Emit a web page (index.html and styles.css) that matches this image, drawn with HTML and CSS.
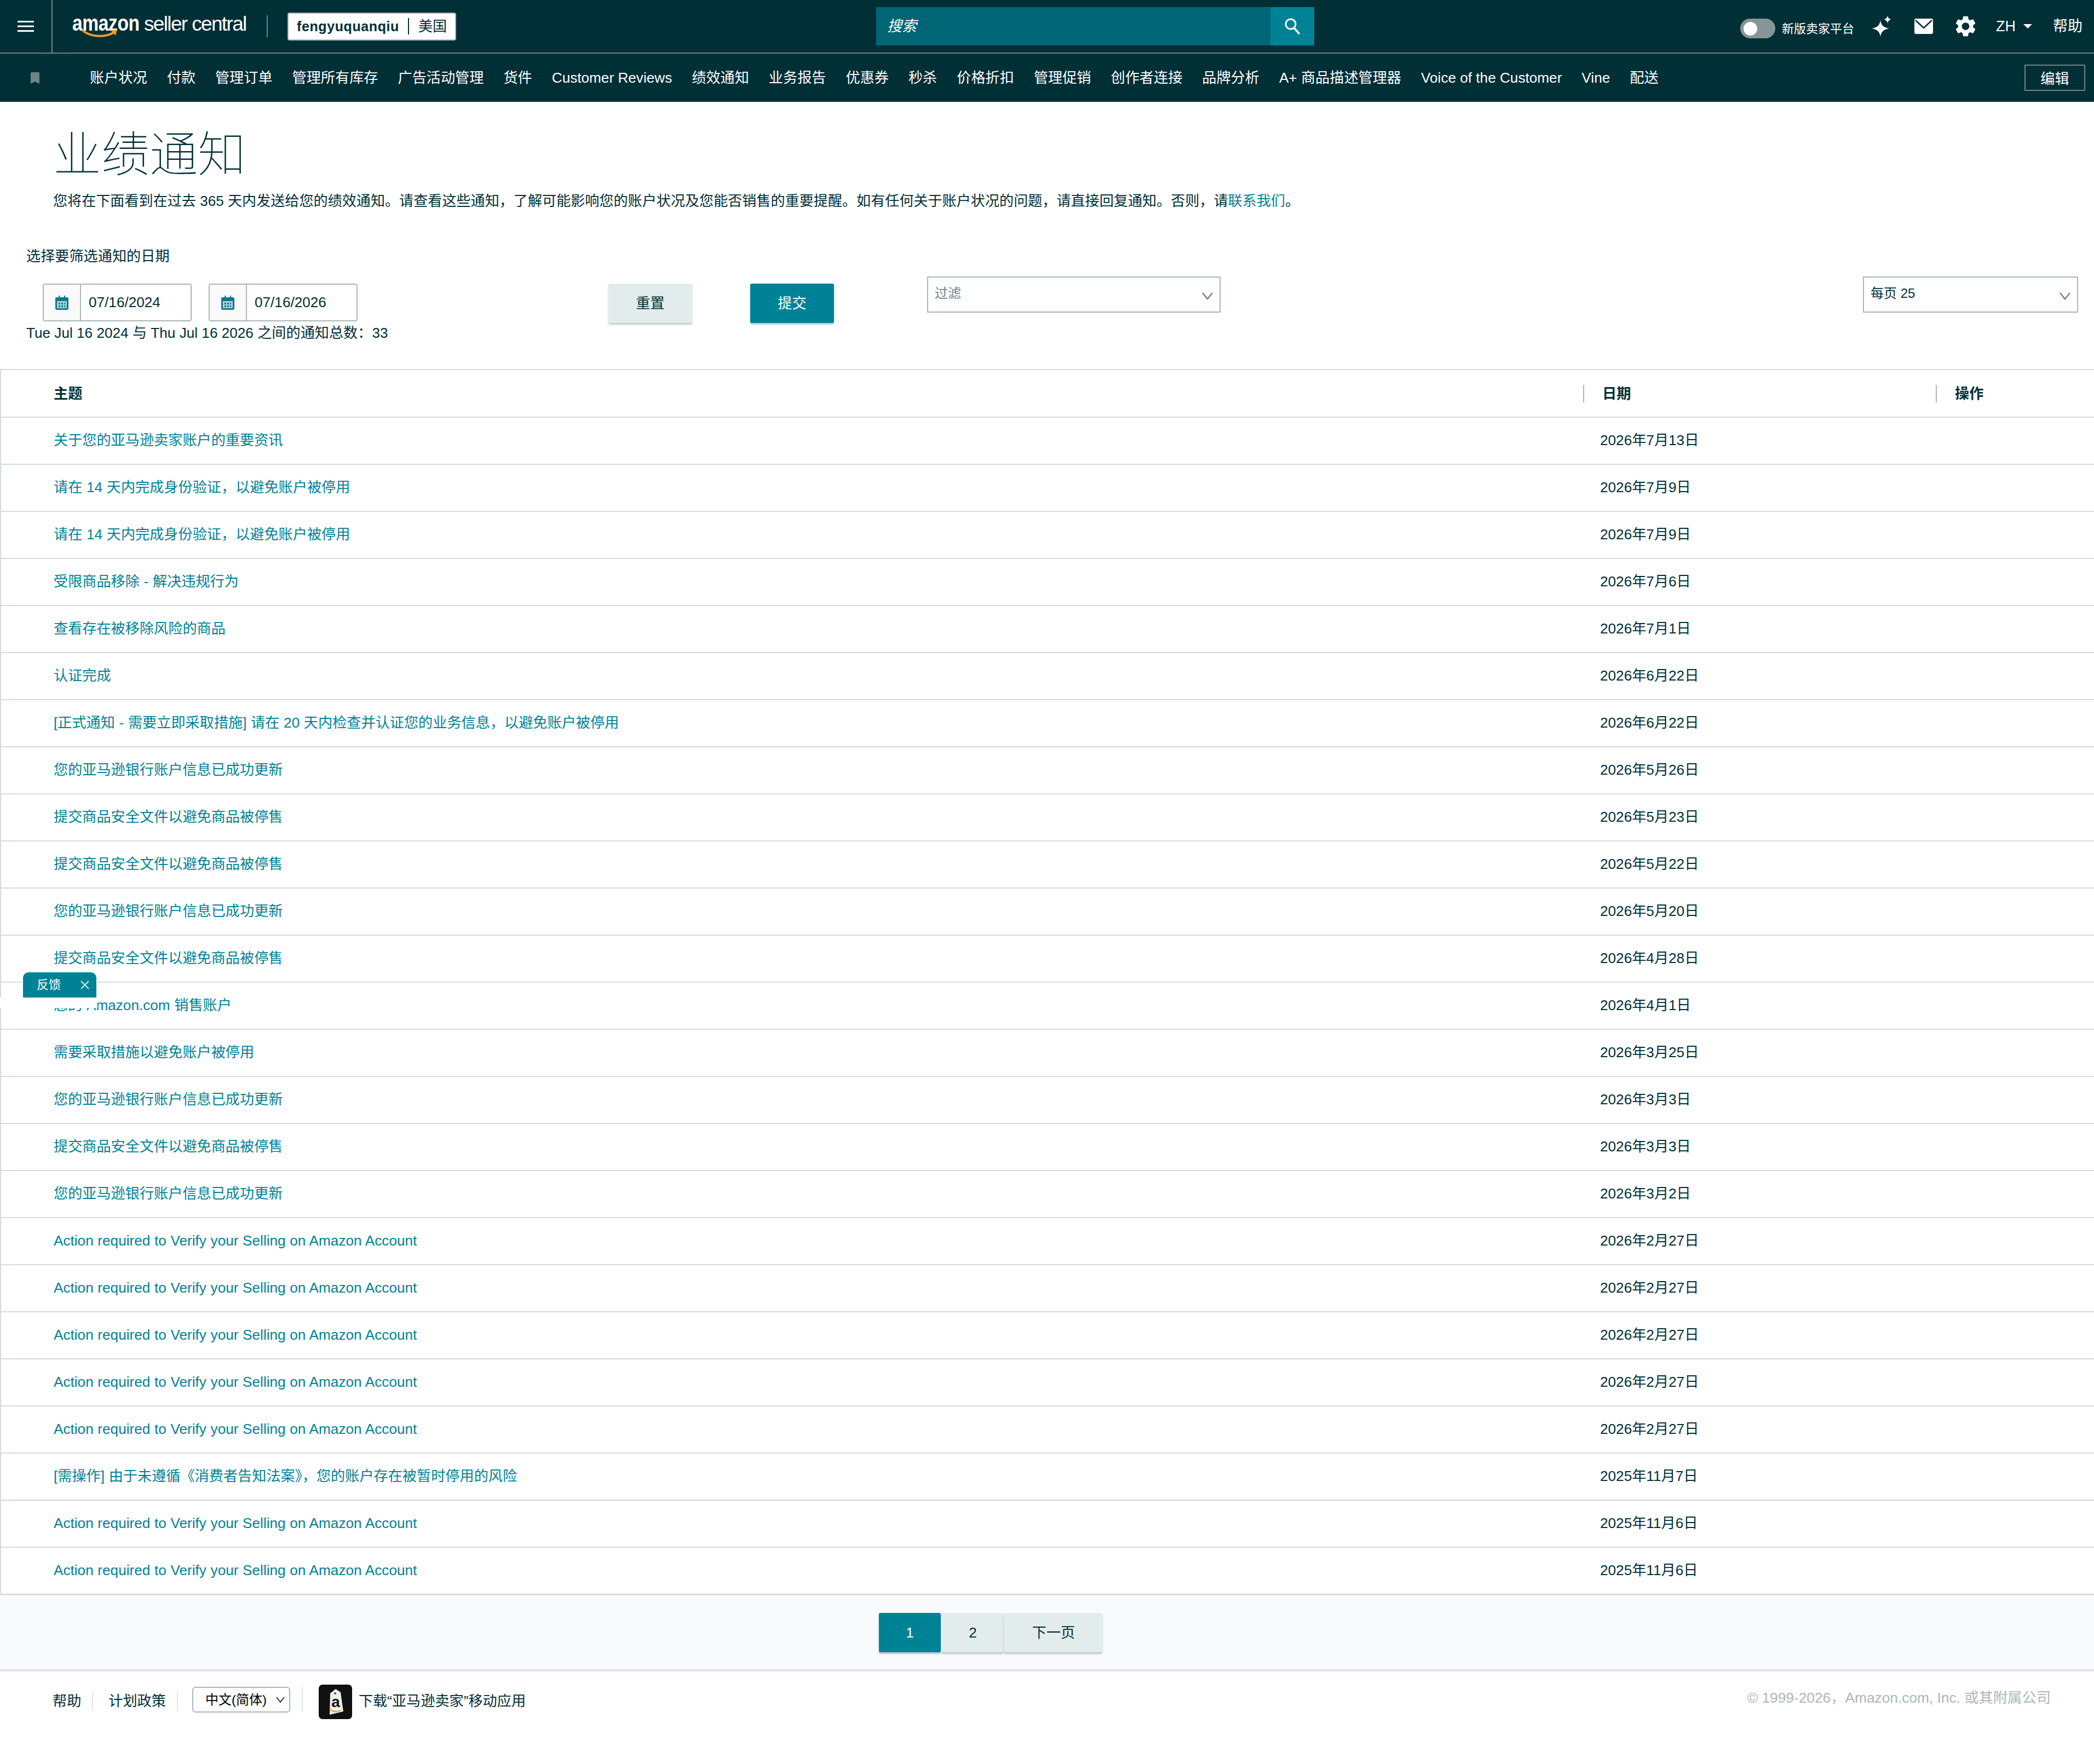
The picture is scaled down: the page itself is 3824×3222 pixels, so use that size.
FILE: index.html
```html
<!DOCTYPE html>
<html>
<head>
  <title>业绩通知</title>
  <link rel="stylesheet" href="styles.css">
</head>
<body>
  <!-- Top bar -->
  <header class="topbar">
    <div class="menu-cell">
      <svg class="hamburger" viewBox="0 0 30 20"><path d="M0 1.500h30M0 10h30M0 18.500h30" stroke="#fff" stroke-width="3"/></svg>
    </div>
    <div class="logo">
      <span class="logo-amazon">amazon</span><span class="logo-rest">seller central</span>
      <svg class="logo-smile" viewBox="0 0 66 14"><path d="M1 2c16 12 40 13 58 3" fill="none" stroke="#f29a2e" stroke-width="4"/><path d="M52 1l12-1-3 11z" fill="#f29a2e"/></svg>
    </div>
    <div class="logo-divider"></div>
    <div class="account"><span class="account-name">fengyuquanqiu</span><span class="account-sep"></span><span class="account-region">美国</span></div>
    <div class="search">
      <input class="search-input" type="text" placeholder="搜索">
      <button class="search-button">
        <svg viewBox="0 0 30 34" width="30" height="34"><circle cx="12" cy="13" r="9" fill="none" stroke="#fff" stroke-width="3"/><path d="M18 20l10 11" stroke="#fff" stroke-width="3.500"/></svg>
      </button>
    </div>
    <div class="top-right">
      <span class="toggle"><span class="toggle-knob"></span></span>
      <span class="toggle-label">新版卖家平台</span>
      <svg class="icon-spark" viewBox="0 0 40 40"><path d="M18 9c1.500 9 5 13 16 15-11 2-14.500 6-16 15-1.500-9-5-13-16-15 11-2 14.500-6 16-15z" fill="#fff"/><path d="M31 0c.6 4 2 6 6.500 7.500-4.500 1.500-5.900 3.500-6.500 7.500-.6-4-2-6-6.500-7.500 4.500-1.500 5.900-3.500 6.500-7.500z" fill="#fff"/></svg>
      <svg class="icon-mail" viewBox="0 0 34 28"><rect width="34" height="28" rx="3" fill="#fff"/><path d="M2 3l15 14L32 3" fill="none" stroke="#002f36" stroke-width="2.500"/></svg>
      <svg class="icon-gear" viewBox="3 2 18 20"><path fill="#fff" d="M19.140 12.940c.04-.3.06-.61.06-.94 0-.32-.02-.64-.07-.94l2.030-1.580c.18-.14.23-.41.12-.61l-1.920-3.320c-.12-.22-.37-.29-.59-.22l-2.390.96c-.5-.38-1.030-.7-1.620-.94l-.36-2.540c-.04-.24-.24-.41-.48-.41h-3.840c-.24 0-.43.17-.47.41l-.36 2.540c-.59.24-1.130.57-1.620.94l-2.390-.96c-.22-.08-.47 0-.59.22L2.740 8.870c-.12.21-.08.47.12.61l2.030 1.580c-.05.3-.09.63-.09.94s.02.64.07.94l-2.030 1.580c-.18.14-.23.41-.12.61l1.920 3.320c.12.22.37.29.59.22l2.390-.96c.5.38 1.030.7 1.620.94l.36 2.540c.05.24.24.41.48.41h3.840c.24 0 .44-.17.47-.41l.36-2.540c.59-.24 1.130-.56 1.620-.94l2.390.96c.22.08.47 0 .59-.22l1.920-3.320c.12-.22.07-.47-.12-.61l-2.010-1.580zM12 15.600c-1.980 0-3.600-1.620-3.600-3.600s1.620-3.600 3.600-3.600 3.600 1.620 3.600 3.600-1.620 3.600-3.600 3.600z"/></svg>
      <span class="lang">ZH</span>
      <span class="lang-caret"></span>
      <span class="top-help">帮助</span>
    </div>
  </header>

  <!-- Bookmark nav -->
  <nav class="navbar">
    <svg class="bookmark" viewBox="0 0 16 21"><path d="M0 1.500Q0 0 1.500 0h13Q16 0 16 1.500V21l-8-4-8 4z" fill="#6f8487"/></svg>
    <a>账户状况</a>
    <a>付款</a>
    <a>管理订单</a>
    <a>管理所有库存</a>
    <a>广告活动管理</a>
    <a>货件</a>
    <a>Customer Reviews</a>
    <a>绩效通知</a>
    <a>业务报告</a>
    <a>优惠券</a>
    <a>秒杀</a>
    <a>价格折扣</a>
    <a>管理促销</a>
    <a>创作者连接</a>
    <a>品牌分析</a>
    <a>A+ 商品描述管理器</a>
    <a>Voice of the Customer</a>
    <a>Vine</a>
    <a>配送</a>
    <button class="edit-button">编辑</button>
  </nav>

  <!-- Page heading -->
  <div class="page-head">
    <h1>业绩通知</h1>
    <p>您将在下面看到在过去 365 天内发送给您的绩效通知。请查看这些通知，了解可能影响您的账户状况及您能否销售的重要提醒。如有任何关于账户状况的问题，请直接回复通知。否则，请<a href="#">联系我们</a>。</p>
  </div>

  <!-- Filters -->
  <div class="filters">
    <div class="filters-label">选择要筛选通知的日期</div>
    <div class="filters-row">
      <div class="date-field">
        <span class="date-addon">
          <svg viewBox="0 0 24 26" width="24" height="26"><path d="M3 3h3V0h2v3h8V0h2v3h3q3 0 3 3v17q0 3-3 3H3q-3 0-3-3V6q0-3 3-3z" fill="#0c7a8e"/><path d="M3 10h18v13H3z" fill="#a9cfd6"/><path d="M6 13h3v3H6zM11 13h3v3h-3zM16 13h2v3h-2zM6 18h3v3H6zM11 18h3v3h-3zM16 18h2v3h-2z" fill="#0c7a8e"/></svg>
        </span>
        <input class="date-input" type="text" value="07/16/2024">
      </div>
      <div class="date-field date-field-end">
        <span class="date-addon">
          <svg viewBox="0 0 24 26" width="24" height="26"><path d="M3 3h3V0h2v3h8V0h2v3h3q3 0 3 3v17q0 3-3 3H3q-3 0-3-3V6q0-3 3-3z" fill="#0c7a8e"/><path d="M3 10h18v13H3z" fill="#a9cfd6"/><path d="M6 13h3v3H6zM11 13h3v3h-3zM16 13h2v3h-2zM6 18h3v3H6zM11 18h3v3h-3zM16 18h2v3h-2z" fill="#0c7a8e"/></svg>
        </span>
        <input class="date-input" type="text" value="07/16/2026">
      </div>
      <button class="btn btn-reset">重置</button>
      <button class="btn btn-submit">提交</button>
      <div class="dropdown dropdown-filter">
        <span>过滤</span>
        <svg viewBox="0 0 20 14" width="20" height="14"><path d="M1 1l9 11 9-11" fill="none" stroke="#6f8487" stroke-width="2.500"/></svg>
      </div>
      <div class="dropdown dropdown-page">
        <span>每页 25</span>
        <svg viewBox="0 0 20 14" width="20" height="14"><path d="M1 1l9 11 9-11" fill="none" stroke="#6f8487" stroke-width="2.500"/></svg>
      </div>
    </div>
    <div class="filters-total">Tue Jul 16 2024 与 Thu Jul 16 2026 之间的通知总数：33</div>
  </div>

  <!-- Notifications table -->
  <table class="notices">
    <colgroup>
      <col class="col-subject">
      <col class="col-date">
      <col class="col-action">
    </colgroup>
    <thead>
      <tr>
        <th class="th-subject">主题</th>
        <th><div class="th-inner">日期</div></th>
        <th><div class="th-inner">操作</div></th>
      </tr>
    </thead>
    <tbody>
      <tr><td><a href="#">关于您的亚马逊卖家账户的重要资讯</a></td><td>2026年7月13日</td><td></td></tr>
      <tr><td><a href="#">请在 14 天内完成身份验证，以避免账户被停用</a></td><td>2026年7月9日</td><td></td></tr>
      <tr><td><a href="#">请在 14 天内完成身份验证，以避免账户被停用</a></td><td>2026年7月9日</td><td></td></tr>
      <tr><td><a href="#">受限商品移除 - 解决违规行为</a></td><td>2026年7月6日</td><td></td></tr>
      <tr><td><a href="#">查看存在被移除风险的商品</a></td><td>2026年7月1日</td><td></td></tr>
      <tr><td><a href="#">认证完成</a></td><td>2026年6月22日</td><td></td></tr>
      <tr><td><a href="#">[正式通知 - 需要立即采取措施] 请在 20 天内检查并认证您的业务信息，以避免账户被停用</a></td><td>2026年6月22日</td><td></td></tr>
      <tr><td><a href="#">您的亚马逊银行账户信息已成功更新</a></td><td>2026年5月26日</td><td></td></tr>
      <tr><td><a href="#">提交商品安全文件以避免商品被停售</a></td><td>2026年5月23日</td><td></td></tr>
      <tr><td><a href="#">提交商品安全文件以避免商品被停售</a></td><td>2026年5月22日</td><td></td></tr>
      <tr><td><a href="#">您的亚马逊银行账户信息已成功更新</a></td><td>2026年5月20日</td><td></td></tr>
      <tr><td><a href="#">提交商品安全文件以避免商品被停售</a></td><td>2026年4月28日</td><td></td></tr>
      <tr><td><a href="#">您的 Amazon.com 销售账户</a></td><td>2026年4月1日</td><td></td></tr>
      <tr><td><a href="#">需要采取措施以避免账户被停用</a></td><td>2026年3月25日</td><td></td></tr>
      <tr><td><a href="#">您的亚马逊银行账户信息已成功更新</a></td><td>2026年3月3日</td><td></td></tr>
      <tr><td><a href="#">提交商品安全文件以避免商品被停售</a></td><td>2026年3月3日</td><td></td></tr>
      <tr><td><a href="#">您的亚马逊银行账户信息已成功更新</a></td><td>2026年3月2日</td><td></td></tr>
      <tr><td><a href="#">Action required to Verify your Selling on Amazon Account</a></td><td>2026年2月27日</td><td></td></tr>
      <tr><td><a href="#">Action required to Verify your Selling on Amazon Account</a></td><td>2026年2月27日</td><td></td></tr>
      <tr><td><a href="#">Action required to Verify your Selling on Amazon Account</a></td><td>2026年2月27日</td><td></td></tr>
      <tr><td><a href="#">Action required to Verify your Selling on Amazon Account</a></td><td>2026年2月27日</td><td></td></tr>
      <tr><td><a href="#">Action required to Verify your Selling on Amazon Account</a></td><td>2026年2月27日</td><td></td></tr>
      <tr><td><a href="#">[需操作] 由于未遵循《消费者告知法案》，您的账户存在被暂时停用的风险</a></td><td>2025年11月7日</td><td></td></tr>
      <tr><td><a href="#">Action required to Verify your Selling on Amazon Account</a></td><td>2025年11月6日</td><td></td></tr>
      <tr><td><a href="#">Action required to Verify your Selling on Amazon Account</a></td><td>2025年11月6日</td><td></td></tr>
    </tbody>
  </table>

  <!-- Pagination -->
  <div class="pagination">
    <a class="page-btn page-current">1</a>
    <a class="page-btn page-two">2</a>
    <a class="page-btn page-next">下一页</a>
  </div>

  <!-- Footer -->
  <footer class="footer">
    <a class="footer-link footer-help">帮助</a>
    <a class="footer-link footer-policy">计划政策</a>
    <select class="footer-lang"><option>中文(简体)</option></select>
    <span class="footer-sep"></span>
    <svg class="app-icon" viewBox="0 0 61 63">
      <rect width="61" height="63" rx="7" fill="#111"/>
      <path d="M21 16l10-8 9 6 5 35-25 6z" fill="#f1efe9"/>
      <circle cx="30" cy="16" r="2" fill="#555"/>
      <text x="31" y="41" class="app-icon-letter" text-anchor="middle">a</text>
      <path d="M21 46q10 6 19 1" fill="none" stroke="#f0a23c" stroke-width="2.500"/>
    </svg>
    <a class="footer-app">下载“亚马逊卖家”移动应用</a>
    <span class="copyright">© 1999-2026，Amazon.com, Inc. 或其附属公司</span>
  </footer>

  <!-- Feedback tab sits over the table -->
  <div class="feedback">
    <div class="feedback-tab">
      <span>反馈</span>
      <svg viewBox="0 0 16 16" width="16" height="16"><path d="M1 1l14 14M15 1L1 15" stroke="#d8eaed" stroke-width="2"/></svg>
    </div>
    <div class="feedback-strip"></div>
  </div>
</body>
</html>
```
FILE: styles.css
```css
/* Base */
body {
  margin: 0;
  min-height: 3222px;
  background-color: #fff;
  color: #002f36;
  font-family: "Liberation Sans", "Noto Sans CJK SC", sans-serif;
  font-size: 26.16px;
  line-height: 36px;
  position: relative;
}
a {
  color: #008296;
  text-decoration: none;
}
button, input, select {
  font-family: inherit;
  font-size: 26.16px;
}

/* Top bar */
.topbar {
  display: flex;
  align-items: center;
  height: 96px;
  background-color: #002f36;
  border-bottom: 2px solid #6f8487;
  color: #fff;
}
.menu-cell {
  display: flex;
  align-items: center;
  justify-content: center;
  box-sizing: border-box;
  width: 96px;
  height: 96px;
  border-right: 2px solid #6f8487;
}
.hamburger {
  width: 30px;
  height: 20px;
}
.logo {
  position: relative;
  width: 318px;
  height: 60px;
  margin-left: 36px;
  margin-top: -4px;
  white-space: nowrap;
  line-height: 52px;
}
.logo-amazon {
  display: inline-block;
  width: 123px;
  font-size: 41px;
  font-weight: bold;
  letter-spacing: -.5px;
  transform: scaleX(.82);
  transform-origin: left;
}
.logo-rest {
  font-size: 37px;
  margin-left: 8px;
  letter-spacing: -1.650px;
}
.logo-smile {
  position: absolute;
  left: 18px;
  top: 38px;
  width: 66px;
  height: 14px;
}
.logo-divider {
  width: 2px;
  height: 40px;
  margin-left: 37px;
  background-color: #6f8487;
}
.account {
  display: flex;
  align-items: center;
  box-sizing: border-box;
  width: 308px;
  height: 51px;
  margin-left: 36px;
  padding-left: 15px;
  background-color: #fff;
  border: 2px solid #aab7b8;
  border-radius: 4px;
  color: #002f36;
}
.account-name {
  font-size: 25px;
  font-weight: 600;
  letter-spacing: .6px;
}
.account-sep {
  width: 2px;
  height: 30px;
  margin: 0 17px 0 16px;
  background-color: #002f36;
}
.search {
  display: flex;
  height: 70px;
  margin-left: 767px;
}
.search-input {
  box-sizing: border-box;
  width: 720px;
  height: 70px;
  padding: 0 20px;
  background-color: #006574;
  border: none;
  color: #fff;
  font-size: 27px;
  font-style: italic;
}
.search-input::placeholder {
  color: #fff;
  opacity: 1;
}
.search-button {
  display: flex;
  align-items: center;
  justify-content: center;
  width: 80px;
  height: 70px;
  padding: 0;
  background-color: #008296;
  border: none;
}
.top-right {
  display: flex;
  align-items: center;
  margin-left: auto;
  padding-right: 21px;
}
.toggle {
  display: block;
  width: 64px;
  height: 36px;
  border-radius: 18px;
  background-color: #879596;
  margin-top: 8px;
  position: relative;
}
.toggle-knob {
  position: absolute;
  left: 6px;
  top: 6px;
  width: 25px;
  height: 25px;
  border-radius: 50%;
  background-color: #fff;
}
.toggle-label {
  margin-left: 12px;
  margin-top: 10px;
  font-size: 22px;
}
.icon-spark {
  width: 40px;
  height: 40px;
  margin-left: 30px;
}
.icon-mail {
  width: 34px;
  height: 28px;
  margin-left: 40px;
}
.icon-gear {
  width: 35px;
  height: 38px;
  margin-left: 42px;
}
.lang {
  margin-left: 38px;
  font-size: 27px;
}
.lang-caret {
  width: 0;
  height: 0;
  margin-left: 14px;
  border-left: 8px solid transparent;
  border-right: 8px solid transparent;
  border-top: 8px solid #fff;
}
.top-help {
  margin-left: 38px;
  font-size: 27px;
}

/* Nav */
.navbar {
  display: flex;
  align-items: center;
  gap: 36px;
  height: 88px;
  padding-left: 56px;
  background-color: #002f36;
  white-space: nowrap;
}
.navbar a {
  color: #fff;
}
.bookmark {
  width: 16px;
  height: 21px;
  margin-right: 56px;
}
.edit-button {
  box-sizing: border-box;
  width: 111px;
  height: 48px;
  margin-left: auto;
  margin-right: 16px;
  background: none;
  border: 2px solid #6f8487;
  color: #fff;
}

/* Heading */
.page-head {
  padding-left: 97px;
}
.page-head h1 {
  margin: 47px 0 0;
  font-size: 88px;
  font-weight: 100;
  line-height: 100px;
}
.page-head p {
  margin: 16px 0 0;
  font-size: 26.1px;
}

/* Filters */
.filters {
  padding-left: 48px;
}
.filters-label {
  margin-top: 65px;
}
.filters-row {
  display: flex;
  align-items: flex-start;
  height: 85px;
  margin-top: 19px;
}
.date-field {
  display: flex;
  box-sizing: border-box;
  width: 272px;
  height: 69px;
  margin-top: 13px;
  margin-left: 30px;
  border: 2px solid #aab7b8;
  border-radius: 4px;
}
.date-field-end {
  margin-left: 31px;
}
.date-addon {
  display: flex;
  align-items: center;
  justify-content: center;
  width: 67px;
  background-color: #fafafa;
  border-right: 2px solid #aab7b8;
}
.date-input {
  width: 186px;
  padding: 0 0 0 14px;
  border: none;
  outline: none;
  color: #002f36;
}
.btn {
  width: 153px;
  height: 72px;
  margin-top: 13px;
  padding: 0 0 4px;
  border: none;
  border-radius: 3px;
  box-shadow: 0 3px 3px rgba(0, 47, 54, 0.25);
}
.btn-reset {
  margin-left: 458px;
  background-color: #e3ecec;
  color: #002f36;
}
.btn-submit {
  margin-left: 106px;
  background-color: #008296;
  color: #fff;
}
.dropdown {
  display: flex;
  align-items: center;
  justify-content: space-between;
  box-sizing: border-box;
  height: 66px;
  padding: 0 12px 0 12px;
  border: 2px solid #aab7b8;
  font-size: 24px;
}
.dropdown span {
  margin-top: -4px;
}
.dropdown svg {
  margin-top: 6px;
}
.dropdown-filter {
  width: 536px;
  margin-left: 170px;
  color: #6f8487;
}
.dropdown-page {
  width: 393px;
  margin-left: 1173px;
}

/* Table */
.notices {
  width: 100%;
  margin-top: 48px;
  table-layout: fixed;
  border-collapse: separate;
  border-spacing: 0;
  border-top: 2px solid #d5dbdb;
  border-left: 2px solid #d5dbdb;
}
.col-date {
  width: 644px;
}
.col-action {
  width: 289px;
}
.notices th {
  height: 85px;
  padding: 0;
  border-bottom: 2px solid #d5dbdb;
  text-align: left;
  font-weight: bold;
}
.notices .th-subject {
  padding-left: 96px;
}
.th-inner {
  height: 32px;
  padding-left: 33px;
  border-left: 2px solid #aab7b8;
  line-height: 32px;
}
.notices td {
  height: 82px;
  padding: 0 0 2px 31px;
  border-bottom: 2px solid #d5dbdb;
  word-spacing: .4px;
}
.notices td:first-child {
  padding-left: 96px;
}

/* Pagination */
.pagination {
  display: flex;
  align-items: center;
  box-sizing: border-box;
  height: 140px;
  padding-left: 1605px;
  background-color: #f9fafb;
  border-top: 1px solid #dfe3e6;
  border-bottom: 4px solid #dfe3e6;
}
.page-btn {
  display: flex;
  align-items: center;
  justify-content: center;
  height: 72px;
  margin-right: 1px;
  border-radius: 3px;
  background-color: #e3ecec;
  color: #002f36;
  box-shadow: 0 3px 3px rgba(0, 47, 54, 0.25);
}
.page-current {
  width: 113px;
  background-color: #008296;
  color: #fff;
}
.page-two {
  width: 113px;
  padding-left: 2px;
  box-sizing: border-box;
}
.page-next {
  width: 180px;
  padding-left: 2px;
  box-sizing: border-box;
}

/* Footer */
.footer {
  display: flex;
  align-items: flex-start;
  padding-top: 24px;
  padding-left: 96px;
}
.footer-link {
  color: #002f36;
  margin-top: 12px;
  height: 36px;
}
.footer-help {
  padding-right: 20px;
  border-right: 2px solid #e3e6e6;
}
.footer-policy {
  margin-left: 28px;
  padding-right: 20px;
  border-right: 2px solid #e3e6e6;
}
.footer-lang {
  box-sizing: border-box;
  width: 179px;
  height: 47px;
  margin-left: 26px;
  margin-top: 4px;
  padding-left: 22px;
  background: #fff url("data:image/svg+xml,%3Csvg xmlns='http://www.w3.org/2000/svg' viewBox='0 0 16 12'%3E%3Cpath d='M1 1l7 9 7-9' fill='none' stroke='%23222' stroke-width='1.800'/%3E%3C/svg%3E") no-repeat right 8px center / 16px 12px;
  border: 2px solid #aab7b8;
  border-radius: 6px;
  color: #000;
  font-size: 24px;
  appearance: none;
}
.footer-sep {
  width: 2px;
  height: 46px;
  margin-left: 21px;
  margin-top: 4px;
  background-color: #e3e6e6;
}
.app-icon {
  width: 61px;
  height: 63px;
  margin-left: 29px;
}
.app-icon-letter {
  font-size: 28px;
  font-weight: bold;
  fill: #111;
}
.footer-app {
  margin-left: 12px;
  margin-top: 12px;
  color: #002f36;
}
.copyright {
  margin-left: auto;
  margin-right: 79px;
  margin-top: 6px;
  color: #aab7b8;
  font-size: 26.3px;
}

/* Feedback tab */
.feedback {
  position: absolute;
  left: 0;
  top: 1774px;
  width: 178px;
}
.feedback-tab {
  display: flex;
  align-items: center;
  justify-content: space-between;
  box-sizing: border-box;
  width: 138px;
  height: 48px;
  margin-left: 40px;
  padding: 0 13px 0 25px;
  background-color: #008296;
  border: 2px solid #fff;
  border-bottom: none;
  border-radius: 12px 12px 0 0;
  color: #fff;
  font-size: 22px;
}
.feedback-strip {
  height: 19px;
  background-color: #fff;
}
```
